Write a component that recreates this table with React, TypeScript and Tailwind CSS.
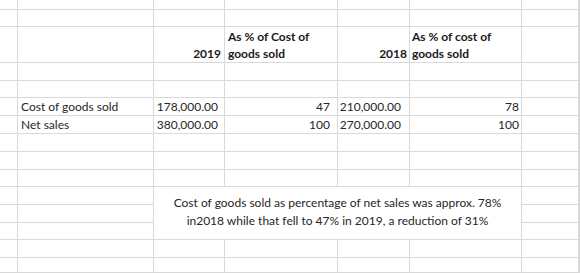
import { ReactNode } from "react";

const ROWS = 15;
const COLS = 8;

// merged text box: rows 11-13, columns C-F
const inMerge = (r: number, c: number) => r >= 11 && r <= 13 && c >= 3 && c <= 6;

const cells: Record<string, { content: ReactNode; className?: string }> = {
  "3-3": { content: <span className="leading-[17px]">2019</span>, className: "items-end justify-end pr-[3px] font-bold text-[#1a1a1a]" },
  "3-4": {
    content: (
      <span className="leading-[17px]">
        As % of Cost of
        <br />
        goods sold
      </span>
    ),
    className: "items-end pl-[3px] font-bold text-[#1a1a1a]",
  },
  "3-5": { content: <span className="leading-[17px]">2018</span>, className: "items-end justify-end pr-[2px] font-bold text-[#1a1a1a]" },
  "3-6": {
    content: (
      <span className="leading-[17px]">
        As % of cost of
        <br />
        goods sold
      </span>
    ),
    className: "items-end pl-[2px] font-bold text-[#1a1a1a]",
  },
  "6-2": { content: "Cost of goods sold", className: "pl-[3px] pt-[1px]" },
  "6-3": { content: "178,000.00", className: "justify-end pr-[6px] pt-[1px]" },
  "6-4": { content: "47", className: "justify-end pr-[7px] pt-[1px]" },
  "6-5": { content: "210,000.00", className: "justify-end pr-[8px] pt-[1px]" },
  "6-6": { content: "78", className: "justify-end pr-[2px] pt-[1px]" },
  "7-2": { content: "Net sales", className: "pl-[3px] pt-[1px]" },
  "7-3": { content: "380,000.00", className: "justify-end pr-[6px] pt-[1px]" },
  "7-4": { content: "100", className: "justify-end pr-[7px] pt-[1px]" },
  "7-5": { content: "270,000.00", className: "justify-end pr-[8px] pt-[1px]" },
  "7-6": { content: "100", className: "justify-end pr-[2px] pt-[1px]" },
};

export default function App() {
  const grid: ReactNode[] = [];
  for (let r = 1; r <= ROWS; r++) {
    for (let c = 1; c <= COLS; c++) {
      if (inMerge(r, c)) {
        if (r === 11 && c === 3) {
          grid.push(
            <div
              key="merge"
              className="col-start-3 col-span-4 row-start-11 row-span-3 flex items-center justify-center border-r border-b border-[#d9d9d9] text-center leading-[18px] pb-[2px]"
            >
              <span>
                Cost of goods sold as percentage of net sales was approx. 78%
                <br />
                in2018 while that fell to 47% in 2019, a reduction of 31%
              </span>
            </div>
          );
        }
        continue;
      }
      const cell = cells[`${r}-${c}`];
      grid.push(
        <div
          key={`${r}-${c}`}
          style={{ gridRow: r, gridColumn: c }}
          className={`flex items-center whitespace-nowrap overflow-visible border-r border-b border-[#d9d9d9] ${cell?.className ?? ""}`}
        >
          {cell?.content}
        </div>
      );
    }
  }

  return (
    <div className="w-[580px] h-[273px] overflow-hidden bg-white">
      <div
        className="grid grid-cols-[18px_136px_71px_113px_72px_112px_57px_1fr] grid-rows-[10px_17px_36px_18px_17px_18px_18px_18px_18px_17px_18px_18px_17px_18px_15px] text-[12px] text-[#262626] font-['Lato',sans-serif]"
      >
        {grid}
      </div>
    </div>
  );
}
